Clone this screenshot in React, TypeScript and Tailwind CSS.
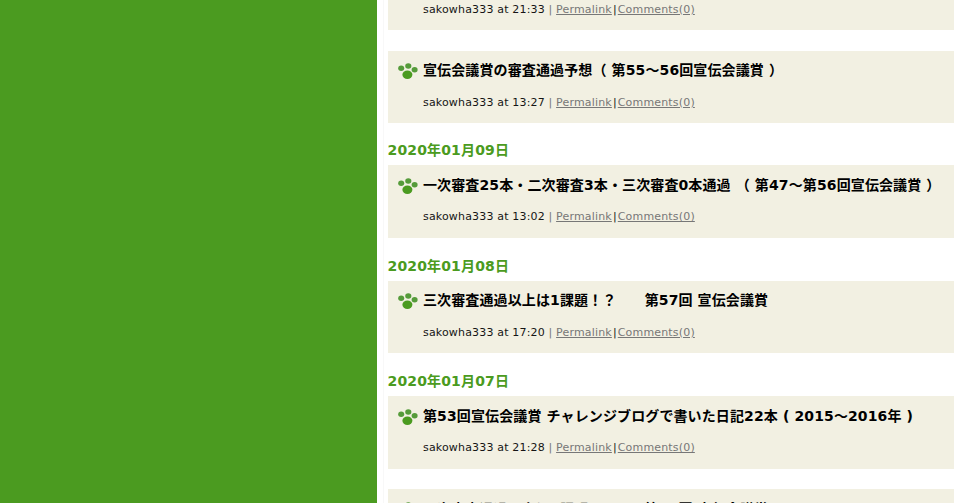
type Post = { title: string; time: string };
type Day = { date?: string; posts: Post[] };

const days: Day[] = [
    {
        posts: [
            { title: '', time: '21:33' },
            { title: '宣伝会議賞の審査通過予想（ 第55〜56回宣伝会議賞 ）', time: '13:27' },
        ],
    },
    {
        date: '2020年01月09日',
        posts: [{ title: '一次審査25本・二次審査3本・三次審査0本通過 （ 第47〜第56回宣伝会議賞 ）', time: '13:02' }],
    },
    {
        date: '2020年01月08日',
        posts: [{ title: '三次審査通過以上は1課題！？　　第57回 宣伝会議賞', time: '17:20' }],
    },
    {
        date: '2020年01月07日',
        posts: [
            { title: '第53回宣伝会議賞 チャレンジブログで書いた日記22本 ( 2015〜2016年 )', time: '21:28' },
            { title: '二次審査通過以上は1課題！？　　第57回 宣伝会議賞', time: '' },
        ],
    },
];

const Paw = () => (
    <svg viewBox="0 0 20 17" className="mt-[3px] mr-[5px] h-[17px] w-5 shrink-0" fill="#559b3a">
        <ellipse cx="3.2" cy="5.3" rx="3" ry="2.7" />
        <ellipse cx="10.3" cy="3" rx="3.1" ry="2.7" />
        <ellipse cx="16.6" cy="6.7" rx="3" ry="2.7" />
        <ellipse cx="9.4" cy="11.7" rx="5" ry="4.2" fill="#4b9b20" />
    </svg>
);

const Entry = ({ title, time }: Post) => (
    <article className="h-[72.5px] bg-[#f2f0e2] pt-[9.5px] pl-[10.5px]">
        <div className="flex h-5">
            <Paw />
            <h3 className="text-[14px] leading-5 font-bold tracking-[0.12px] whitespace-pre text-black">{title}</h3>
        </div>
        {time && (
            <p className="mt-[14.5px] pl-[25px] text-[11px] leading-4 tracking-[0.17px] whitespace-pre text-[#151515]">
                sakowha333 at {time}
                <span className="text-[#777]"> | </span>
                <a href="#" className="text-[#777] underline">Permalink</a>
                <span className="px-px">|</span>
                <a href="#" className="text-[#777] underline">Comments(0)</a>
            </p>
        )}
    </article>
);

const App = () => {
    return (
        <div className="flex h-[503px] overflow-hidden bg-white font-['DejaVu_Sans','Noto_Sans_CJK_JP',sans-serif]">
            <div className="w-[377px] shrink-0 bg-[#4b9b20]" />

            {/* Entradas del blog */}
            <main className="-mt-[42.4px] ml-[5.5px] w-[571px] shrink-0 border-l border-[#f8f8f8] pl-1">
                {days.map((day, i) => (
                    <section key={i} className={i === 0 ? 'mb-[16.2px]' : 'mb-[17px]'}>
                        {day.date && (
                            <h2 className="h-[26px] text-[14px] leading-[23px] font-bold tracking-[0.15px] text-[#4b9b20]">
                                {day.date}
                            </h2>
                        )}
                        <div className="flex flex-col gap-[20.5px]">
                            {day.posts.map((post) => (
                                <Entry key={post.time} {...post} />
                            ))}
                        </div>
                    </section>
                ))}
            </main>
        </div>
    );
};

export default App;
